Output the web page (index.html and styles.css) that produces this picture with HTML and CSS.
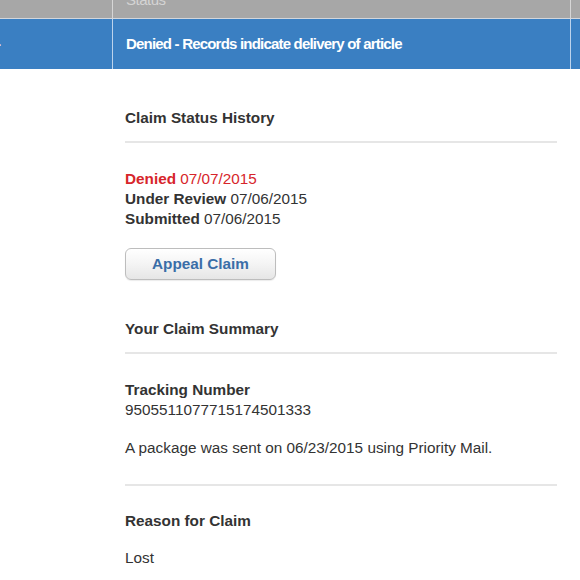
FILE: index.html
```html
<!DOCTYPE html>
<html>
<head>
<meta charset="utf-8">
<link rel="stylesheet" href="styles.css">
</head>
<body>
<div class="grid">
  <div class="cell head c1"></div>
  <div class="cell head c2">Status</div>
  <div class="cell head c3"></div>
  <div class="cell row c1"><span class="cut">-</span></div>
  <div class="cell row c2">Denied - Records indicate delivery of article</div>
  <div class="cell row c3"></div>
</div>
<main class="content">
  <section class="section">
    <h2 class="title">Claim Status History</h2>
    <div class="history">
      <div class="red"><b>Denied</b> 07/07/2015</div>
      <div><b>Under Review</b> 07/06/2015</div>
      <div><b>Submitted</b> 07/06/2015</div>
    </div>
    <button class="btn">Appeal Claim</button>
  </section>
  <section class="section summary">
    <h2 class="title">Your Claim Summary</h2>
    <div class="block">
      <div><b>Tracking Number</b></div>
      <div>9505511077715174501333</div>
      <p class="para">A package was sent on 06/23/2015 using Priority Mail.</p>
    </div>
    <div class="block reason">
      <div><b>Reason for Claim</b></div>
      <p class="para2">Lost</p>
    </div>
  </section>
</main>
</body>
</html>
```
FILE: styles.css
```css
html, body {
  margin: 0;
  padding: 0;
  background: #ffffff;
  font-family: "Liberation Sans", Arial, sans-serif;
  font-size: 15.3px;
  line-height: 20px;
  color: #333333;
  overflow: hidden;
}
.grid {
  display: grid;
  grid-template-columns: 112px 458px 10px;
  margin-top: -20px;
}
.cell {
  box-sizing: border-box;
}
.head {
  background: #a7a7a7;
  height: 39px;
  border-bottom: 1px solid #d2d6dc;
  color: #d4d4d4;
  padding: 10px 0 0 13px;
  font-size: 15px;
  letter-spacing: -0.5px;
}
.head.c2, .head.c3 {
  border-left: 1px solid #d6d6d6;
}
.row {
  background: #3a7fc2;
  height: 50px;
  color: #ffffff;
  font-weight: bold;
  font-size: 15px;
  letter-spacing: -0.8px;
  padding: 15px 0 0 13px;
  white-space: nowrap;
  overflow: hidden;
}
.row.c1 { padding-left: 0; }
.row.c2, .row.c3 {
  border-left: 1px solid #bcd3ec;
}
.cut {
  display: inline-block;
  margin-left: -4px;
}
.content {
  padding: 0 23px 0 125px;
}
.section {
  padding-top: 39px;
}
.title {
  margin: 0;
  font-size: 15.3px;
  line-height: 20px;
  font-weight: bold;
  color: #333333;
  padding-bottom: 13px;
  border-bottom: 2px solid #e6e6e6;
}
.history {
  padding-top: 26px;
}
.red {
  color: #d7252b;
}
.btn {
  display: block;
  margin-top: 19px;
  width: 151px;
  height: 32px;
  border: 1px solid #bdbdbd;
  border-radius: 6px;
  background: linear-gradient(#ffffff, #f4f4f4 50%, #e6e6e6);
  box-shadow: 0 1px 1px rgba(0,0,0,0.08);
  font-family: "Liberation Sans", Arial, sans-serif;
  font-size: 15.3px;
  font-weight: bold;
  color: #3a6ea8;
  padding: 0;
}
.summary {
  padding-top: 39px;
}
.block {
  padding-top: 26px;
  padding-bottom: 26px;
  border-bottom: 2px solid #e6e6e6;
}
.reason {
  padding-top: 25px;
  border-bottom: none;
}
.para {
  margin: 18px 0 0 0;
}
.para2 {
  margin: 17px 0 0 0;
}
```
